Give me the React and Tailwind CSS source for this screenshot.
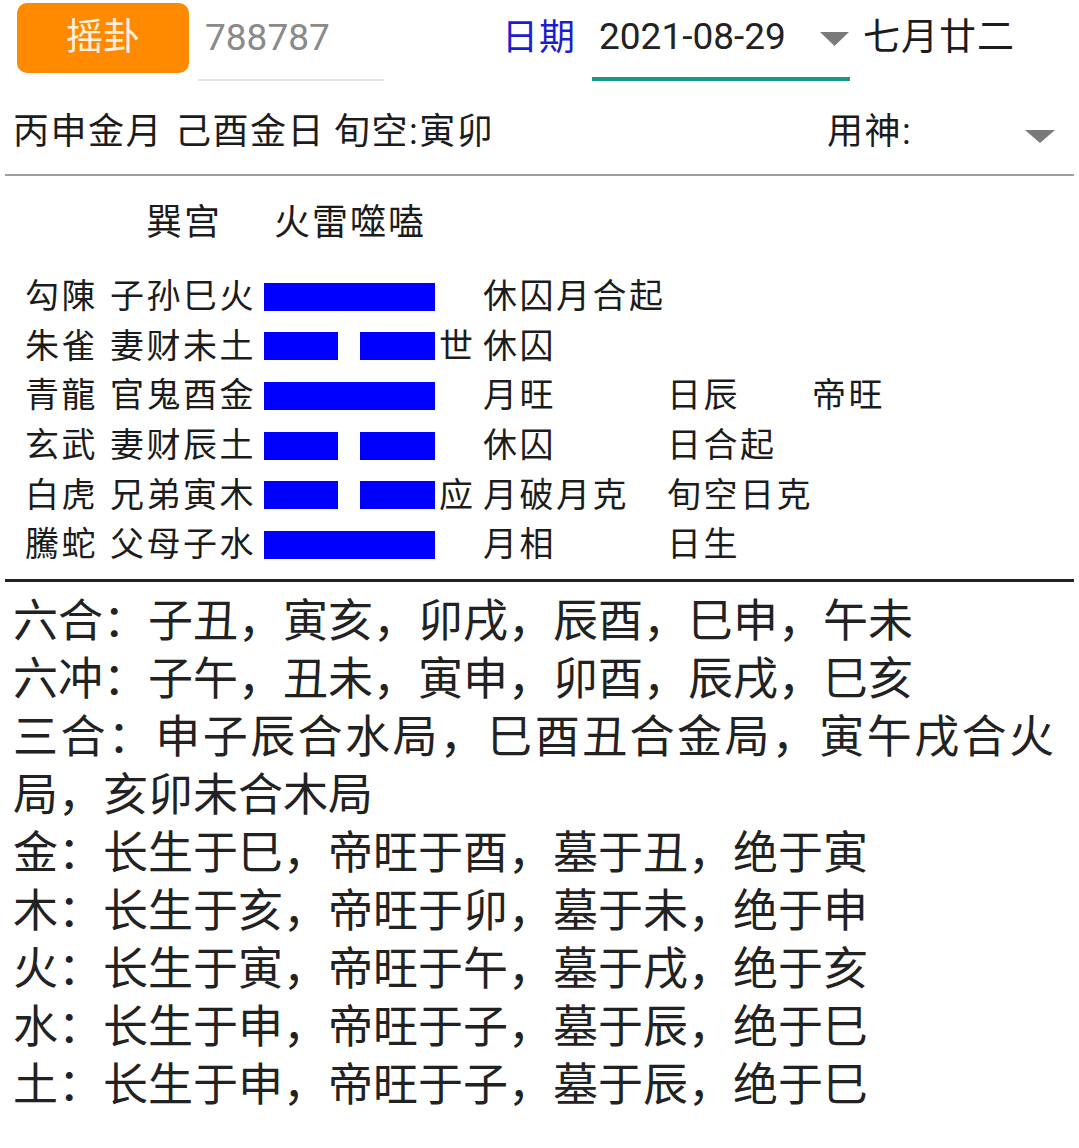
const cjk = { fontFamily: 'Roboto, "Noto Sans CJK SC", sans-serif' };

const rows = [
  { god: "勾陳", rel: "子孙巳火", yang: true, mark: "", a: "休囚月合起", b: "", c: "" },
  { god: "朱雀", rel: "妻财未土", yang: false, mark: "世", a: "休囚", b: "", c: "" },
  { god: "青龍", rel: "官鬼酉金", yang: true, mark: "", a: "月旺", b: "日辰", c: "帝旺" },
  { god: "玄武", rel: "妻财辰土", yang: false, mark: "", a: "休囚", b: "日合起", c: "" },
  { god: "白虎", rel: "兄弟寅木", yang: false, mark: "应", a: "月破月克", b: "旬空日克", c: "" },
  { god: "騰蛇", rel: "父母子水", yang: true, mark: "", a: "月相", b: "日生", c: "" },
];

const notes = [
  "六合：子丑，寅亥，卯戌，辰酉，巳申，午未",
  "六冲：子午，丑未，寅申，卯酉，辰戌，巳亥",
  "三合：申子辰合水局，巳酉丑合金局，寅午戌合火局，亥卯未合木局",
  "金：长生于巳，帝旺于酉，墓于丑，绝于寅",
  "木：长生于亥，帝旺于卯，墓于未，绝于申",
  "火：长生于寅，帝旺于午，墓于戌，绝于亥",
  "水：长生于申，帝旺于子，墓于辰，绝于巳",
  "土：长生于申，帝旺于子，墓于辰，绝于巳",
];

function Caret({ w = 29, h = 14 }) {
  return (
    <svg width={w} height={h} viewBox={`0 0 ${w} ${h}`}>
      <path d={`M0 0H${w}L${w / 2} ${h}Z`} fill="#7a7a7a" />
    </svg>
  );
}

function Line({ yang }) {
  if (yang) return <div className="w-[171px] h-[28px] bg-[#0000ff]" />;
  return (
    <div className="w-[171px] h-[28px] flex justify-between">
      <div className="w-[74px] h-full bg-[#0000ff]" />
      <div className="w-[75px] h-full bg-[#0000ff]" />
    </div>
  );
}

export default function App() {
  return (
    <div className="w-[1079px] min-h-[1148px] bg-white text-[#1c1c1c]" style={cjk}>
      {/* top bar */}
      <div className="flex items-start h-[81px]">
        <div className="ml-[17px] mt-[3px] w-[172px] h-[70px] rounded-[10px] bg-[#ff8a00] flex items-center justify-center text-[37px] text-[#fff1e2]">
          摇卦
        </div>
        <div className="ml-[9px] w-[186px] h-[81px] border-b-2 border-[#e4e4e4] flex items-center pb-[3px] pl-[7px] text-[37px] text-[#8a8a8a]">
          788787
        </div>
        <div className="ml-[118px] h-[81px] flex items-center pb-[5px] text-[36px] tracking-[1px] text-[#1c1cd0]">
          日期
        </div>
        <div className="ml-[16px] w-[258px] h-[81px] border-b-4 border-[#17998a] flex items-center pb-[3px] pl-[7px] text-[37px] text-[#222]">
          <span>2021-08-29</span>
          <span className="ml-auto mr-[1px] mt-[4px]">
            <Caret />
          </span>
        </div>
        <div className="ml-[13px] h-[81px] flex items-center pb-[5px] text-[37px] tracking-[1px]">七月廿二</div>
      </div>

      {/* ganzhi row */}
      <div className="h-[93px] flex items-center pt-[9px] pl-[13px] text-[36px] tracking-[1.5px]">
        <span>丙申金月</span>
        <span className="ml-[12px]">己酉金日</span>
        <span className="ml-[9px]">旬空:寅卯</span>
        <span className="ml-auto mr-[6px] w-[246px] flex items-center">
          <span>用神:</span>
          <span className="ml-auto mr-[18px] mt-[8px]">
            <Caret w={30} h={13} />
          </span>
        </span>
      </div>
      <div className="mx-[5px] h-[2px] bg-[#9e9e9e]" />

      {/* hexagram */}
      <div className="h-[96px] flex items-center pl-[146px] pb-[2px] text-[36px] tracking-[2px]">
        <span>巽宫</span>
        <span className="ml-[52px]">火雷噬嗑</span>
      </div>
      <div className="pl-[25px] text-[34px] tracking-[2.5px]">
        {rows.map((r) => (
          <div key={r.god} className="h-[49.6px] flex items-center whitespace-nowrap">
            <span className="w-[85px]">{r.god}</span>
            <span className="w-[154px]">{r.rel}</span>
            <Line yang={r.yang} />
            <span className="w-[48px] pl-[4px]">{r.mark}</span>
            <span className="w-[184px]">{r.a}</span>
            <span className="w-[145px]">{r.b}</span>
            <span>{r.c}</span>
          </div>
        ))}
      </div>
      <div className="mt-[9px] mx-[5px] h-[3px] bg-[#222]" />

      {/* notes */}
      <div className="pt-[11px] pl-[13px] pr-[25px] text-[45px] leading-[58px] text-[#222] text-justify">
        {notes.map((n) => (
          <p key={n}>{n}</p>
        ))}
      </div>
    </div>
  );
}
